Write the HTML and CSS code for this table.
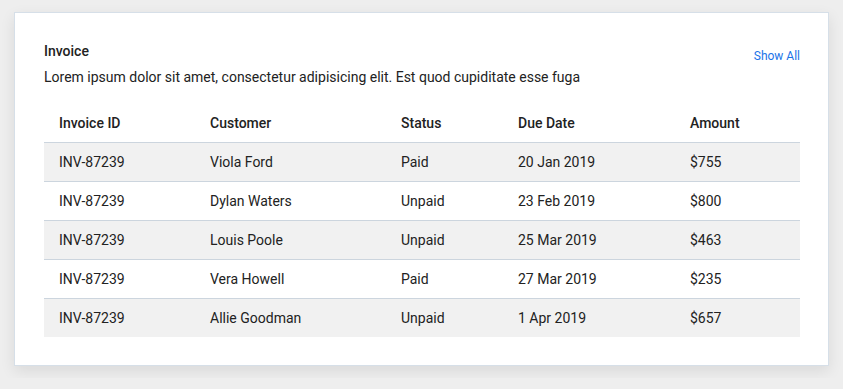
FILE: index.html
```html
<!DOCTYPE html>
<html>
<head>
  <title>Invoice</title>
  <link rel="stylesheet" href="styles.css">
</head>
<body>
  <div class="card">
    <div class="cardHead">
      <div>
        <h2 class="cardTitle">Invoice</h2>
        <p class="cardText">Lorem ipsum dolor sit amet, consectetur adipisicing elit. Est quod cupiditate esse fuga</p>
      </div>
      <a href="#" class="showAll">Show All</a>
    </div>

    <table class="invoices">
      <thead>
        <tr>
          <th class="colId">Invoice ID</th>
          <th class="colCustomer">Customer</th>
          <th class="colStatus">Status</th>
          <th class="colDate">Due Date</th>
          <th>Amount</th>
        </tr>
      </thead>
      <tbody>
        <tr><td>INV-87239</td><td>Viola Ford</td><td>Paid</td><td>20 Jan 2019</td><td>$755</td></tr>
        <tr><td>INV-87239</td><td>Dylan Waters</td><td>Unpaid</td><td>23 Feb 2019</td><td>$800</td></tr>
        <tr><td>INV-87239</td><td>Louis Poole</td><td>Unpaid</td><td>25 Mar 2019</td><td>$463</td></tr>
        <tr><td>INV-87239</td><td>Vera Howell</td><td>Paid</td><td>27 Mar 2019</td><td>$235</td></tr>
        <tr><td>INV-87239</td><td>Allie Goodman</td><td>Unpaid</td><td>1 Apr 2019</td><td>$657</td></tr>
      </tbody>
    </table>
  </div>
</body>
</html>
```

FILE: styles.css
```css
body {margin: 0; padding: 12px 14px; background-color: #eeeeee; font-family: Roboto, "Liberation Sans", sans-serif; color: #222;}
.card {background: #fff; border: 1px solid #d6dfe8; box-shadow: 0 5px 14px rgba(0, 0, 0, 0.09); padding: 30px 28px 28px 29px;}
.cardHead {display: flex; justify-content: space-between; align-items: flex-start;}
.cardTitle {margin: 0; font-size: 14px; font-weight: 500; line-height: 16px; color: #222;}
.cardText {margin: 8px 0 0; font-size: 14px; line-height: 20px; color: #222;}
.showAll {margin-top: 5px; font-size: 12px; line-height: 16px; color: #1a73e8; text-decoration: none;}
.invoices {width: 100%; margin-top: 17px; border-collapse: collapse; font-size: 14px;}
.invoices th, .invoices td {padding: 0 15px; height: 38px; text-align: left; line-height: 20px;}
.invoices th {font-weight: 500; color: #222;}
.invoices td {border-top: 1px solid #ccd5de; color: #222;}
.invoices tbody tr:nth-child(odd) {background: #f1f1f1;}
.colId {width: 121px;}
.colCustomer {width: 161px;}
.colStatus {width: 87px;}
.colDate {width: 142px;}
```
